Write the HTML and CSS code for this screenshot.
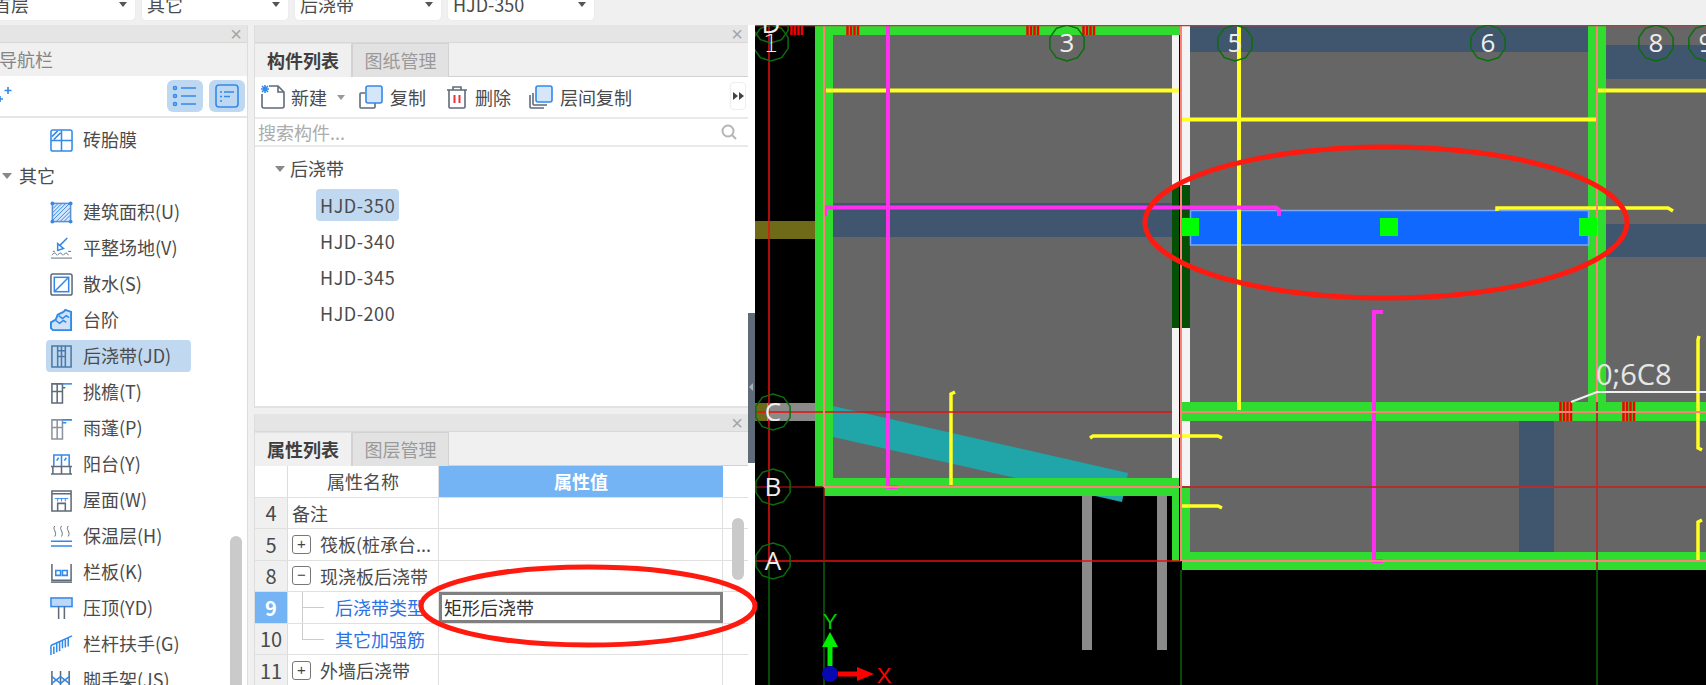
FILE: index.html
```html
<!DOCTYPE html>
<html lang="zh-CN">
<head>
<meta charset="utf-8">
<title>后浇带</title>
<link rel="stylesheet" href="styles.css">
</head>
<body>
<div class="app">
  <header class="topbar">
    <div class="select"><span>首层</span><i class="tri"></i></div>
    <div class="select"><span>其它</span><i class="tri"></i></div>
    <div class="select"><span>后浇带</span><i class="tri"></i></div>
    <div class="select"><span>HJD-350</span><i class="tri"></i></div>
  </header>
  <main class="workspace">
    <section class="nav">
      <div class="titlebar"><span class="close">×</span></div>
      <div class="nav-head"><span>导航栏</span></div>
      <div class="nav-tools">
        <svg class="sparkle" width="14" height="24" viewBox="0 0 14 24"><path class="ib" d="M8 3v7M4.500 6.500h7M0 12v6M-3 15h6"/></svg>
        <div class="nav-btns">
          <button class="view-btn"><svg width="26" height="26" viewBox="0 0 26 26"><path class="ib" d="M9 5h15M9 13h15M9 21h15"/><circle class="ib" cx="3" cy="5" r="1.500"/><circle class="ib" cx="3" cy="13" r="1.500"/><circle class="ib" cx="3" cy="21" r="1.500"/></svg></button>
          <button class="view-btn"><svg width="24" height="24" viewBox="0 0 24 24"><rect class="ib" x="1" y="1" width="22" height="22" rx="3"/><path class="ib" d="M5 8h2M9 8h10M5 12.500h2M9 12.500h6M5 17h2"/></svg></button>
        </div>
      </div>
      <div class="nav-tree">
        <div class="nrow"><svg class="nic" viewBox="0 0 24 24"><rect class="ib" x="1" y="1" width="22" height="22" rx="2"/><path class="ib" d="M12 1v22M1 12h22M2 8l6-6M4 11l7-7"/></svg><span>砖胎膜</span></div>
        <div class="ncat"><i class="tri tri-cat"></i><span>其它</span></div>
        <div class="nrow"><svg class="nic" viewBox="0 0 24 24"><rect class="ifl3" x="2.500" y="2.500" width="19" height="19"/><path class="ib thin" d="M3 8l5-5M3 12l9-9M3 16l13-13M3 20L20 3M7 21L21 7M11 21l10-10M15 21l6-6"/><circle class="dot" cx="2.500" cy="2.500" r="2"/><circle class="dot" cx="21.500" cy="2.500" r="2"/><circle class="dot" cx="2.500" cy="21.500" r="2"/><circle class="dot" cx="21.500" cy="21.500" r="2"/></svg><span>建筑面积(U)</span></div>
        <div class="nrow"><svg class="nic" viewBox="0 0 24 24"><path class="ib" d="M18 1l-8 8M8 7l6 5-6 2z"/><path class="ig thin" d="M1 22h22M2 19c2-3 4-3 5 0M8 19c2-3 4-3 5 0M14 19c2-3 4-3 5 0M19 15h3M3 15h2"/></svg><span>平整场地(V)</span></div>
        <div class="nrow"><svg class="nic" viewBox="0 0 24 24"><rect class="ig" x="1" y="1" width="22" height="22" rx="2"/><rect class="ib" x="4.500" y="4.500" width="15" height="15"/><path class="ib" d="M5 19L19 5"/></svg><span>散水(S)</span></div>
        <div class="nrow"><svg class="nic" viewBox="0 0 24 24"><path class="ifb" d="M1 14l5-3 2-5 6-3 2-2 6 2v19H3l-2-2z"/><path class="ib" d="M6 12l4 3 4-3 3 2M9 7l4 3 4-3 3 2"/></svg><span>台阶</span></div>
        <div class="nrow sel"><svg class="nic" viewBox="0 0 24 24"><path class="ic" d="M2 1h6v22H2zM16 1h6v22h-6zM8 6h8M8 12h8M12 1v22M8 1h8M8 23h8"/></svg><span>后浇带(JD)</span></div>
        <div class="nrow"><svg class="nic" viewBox="0 0 24 24"><path class="ig" d="M2 3h11v20H2zM7.500 3v20M2 11h11"/><path class="ib" d="M13 3h10"/><path class="ig" d="M13 7h3"/></svg><span>挑檐(T)</span></div>
        <div class="nrow"><svg class="nic" viewBox="0 0 24 24"><path class="ig-l" d="M2 3h11v20H2zM7.500 3v20M2 11h11"/><path class="ib" d="M13 3h10M13 6h4"/></svg><span>雨蓬(P)</span></div>
        <div class="nrow"><svg class="nic" viewBox="0 0 24 24"><path class="ib" d="M4 14V2h16v12M12 2v12M7 8l2-3M15 8l2-3"/><path class="ig" d="M1 14h22M1 22h22M3 14v8M12 14v8M21 14v8"/></svg><span>阳台(Y)</span></div>
        <div class="nrow"><svg class="nic" viewBox="0 0 24 24"><path class="ig" d="M2 2h20v3H2zM2 5v18h20V5M8 23v-8h8v8"/><path class="ib thin" d="M5 10h14M8 10v3M12 10v3M16 10v3"/></svg><span>屋面(W)</span></div>
        <div class="nrow"><svg class="nic" viewBox="0 0 24 24"><path class="ig thin" d="M5 1c-3 4 3 6 0 11M12 1c-3 4 3 6 0 11M19 1c-3 4 3 6 0 11"/><path class="ib" d="M1 17h22M1 22h22"/></svg><span>保温层(H)</span></div>
        <div class="nrow"><svg class="nic" viewBox="0 0 24 24"><path class="ig" d="M2 3v17h20V3"/><path class="ib" d="M6 10h5v5H6zM13 10h5v5h-5z"/><path class="ig" d="M1 22h22"/></svg><span>栏板(K)</span></div>
        <div class="nrow"><svg class="nic" viewBox="0 0 24 24"><rect class="ifl" x="1" y="1" width="22" height="9"/><path class="ig" d="M9 10v13M15 10v13"/></svg><span>压顶(YD)</span></div>
        <div class="nrow"><svg class="nic" viewBox="0 0 24 24"><path class="ib" d="M1 13L23 3M1 13v10M7 10v10M13 8v8M19 5v9M4 22v-8M10 19V9M16 15V7"/></svg><span>栏杆扶手(G)</span></div>
        <div class="nrow"><svg class="nic" viewBox="0 0 24 24"><path class="ig" d="M2 2v22M11 2v22M20 2v22"/><path class="ib" d="M2 8l9 7M11 8l-9 7M11 8l9 7M20 8l-9 7"/></svg><span>脚手架(JS)</span></div>
        <div class="vscroll"></div>
      </div>
    </section>

    <section class="mid">
      <div class="panel panel-list">
        <div class="titlebar"><span class="close">×</span></div>
        <div class="tabs"><div class="tab on">构件列表</div><div class="tab">图纸管理</div></div>
        <div class="tools">
          <div class="tool"><svg width="24" height="24" viewBox="0 0 24 24"><path class="ig" d="M8 1h9l6 6v14a2 2 0 0 1-2 2H3a2 2 0 0 1-2-2V9"/><path class="ig" d="M17 1v6h6"/><path class="ib" d="M1 1l6 6M7 1L1 7M4 0v8M0 4h8"/></svg><span>新建</span><i class="tri tri-sm"></i></div>
          <div class="tool t-copy"><svg width="24" height="24" viewBox="0 0 24 24"><path class="ig" d="M6 8H2a1 1 0 0 0-1 1v13a1 1 0 0 0 1 1h13a1 1 0 0 0 1-1v-4"/><rect class="ifl2" x="7" y="1" width="16" height="17" rx="2"/></svg><span>复制</span></div>
          <div class="tool t-del"><svg width="22" height="24" viewBox="0 0 22 24"><path class="ig" d="M1 5h20M7 5V2h8v3M3 5v17a1 1 0 0 0 1 1h14a1 1 0 0 0 1-1V5"/><path class="ir" d="M8.500 10v8M13.500 10v8"/></svg><span>删除</span></div>
          <div class="tool t-floor"><svg width="24" height="24" viewBox="0 0 24 24"><path class="ig" d="M1 10v12a1 1 0 0 0 1 1h13M4 8v11a1 1 0 0 0 1 1h13"/><rect class="ifl2" x="7" y="1" width="16" height="16" rx="2"/></svg><span>层间复制</span></div>
          <div class="more"><i class="mtri"></i><i class="mtri"></i></div>
        </div>
        <div class="search"><span>搜索构件...</span><svg width="16" height="16" viewBox="0 0 16 16"><circle class="is" cx="7" cy="7" r="5.500"/><path class="is" d="M11 11l4 4"/></svg></div>
        <div class="ltree">
          <div class="lcat"><i class="tri tri-cat"></i><span>后浇带</span></div>
          <div class="litem sel">HJD-350</div>
          <div class="litem">HJD-340</div>
          <div class="litem">HJD-345</div>
          <div class="litem">HJD-200</div>
        </div>
      </div>
      <div class="panel panel-props">
        <div class="titlebar"><span class="close">×</span></div>
        <div class="tabs"><div class="tab on">属性列表</div><div class="tab">图层管理</div></div>
        <div class="table">
          <div class="tr thead"><div class="num blank"></div><div class="name center">属性名称</div><div class="val hl">属性值</div></div>
          <div class="tr"><div class="num">4</div><div class="name">备注</div><div class="val"></div></div>
          <div class="tr"><div class="num">5</div><div class="name"><b class="box">+</b><span>筏板(桩承台...</span></div><div class="val"></div></div>
          <div class="tr"><div class="num">8</div><div class="name"><b class="box">−</b><span>现浇板后浇带</span></div><div class="val"></div></div>
          <div class="tr"><div class="num hl">9</div><div class="name child first"><span>后浇带类型</span></div><div class="val edit">矩形后浇带</div></div>
          <div class="tr"><div class="num">10</div><div class="name child last"><span>其它加强筋</span></div><div class="val"></div></div>
          <div class="tr"><div class="num">11</div><div class="name"><b class="box">+</b><span>外墙后浇带</span></div><div class="val"></div></div>
          <div class="vscroll tscroll"></div>
        </div>
      </div>
    </section>

    <div class="splitter"><i class="grip"></i></div>

    <section class="canvas">
      <svg class="cad" width="951" height="660" viewBox="755 25 951 660">
        <defs>
          <polygon id="octa" class="bub" points="0,-18 10.600,-14.600 17.100,-5.600 17.100,5.600 10.600,14.600 0,18 -10.600,14.600 -17.100,5.600 -17.100,-5.600 -10.600,-14.600"/>
          <g id="ticks" class="tick"><path d="M1.500 0v9M5 0v9M8.500 0v9M12 0v9"/></g>
          <g id="ticksT" class="tick"><path d="M1.500 0v19M5 0v19M8.500 0v19M12 0v19"/></g>
        </defs>
        <rect class="grey" x="833" y="35" width="339" height="443"/>
        <rect class="grey" x="1190" y="26" width="516" height="376"/>
        <rect class="grey" x="1190" y="421" width="516" height="131"/>
        <rect class="beam" x="833" y="203" width="339" height="34"/>
        <rect class="beam" x="1190" y="26" width="398" height="26"/>
        <rect class="beam" x="1606" y="45" width="100" height="34"/>
        <rect class="beam" x="1606" y="224" width="100" height="33"/>
        <rect class="beam" x="1519" y="421" width="35" height="131"/>
        <rect class="olive" x="755" y="221" width="60" height="18"/>
        <rect class="stub" x="755" y="403" width="60" height="18"/>
        <rect class="olive" x="755" y="403" width="12" height="18"/>
        <polygon class="teal" points="833,406 1128,473 1122,502 833,437"/>
        <rect class="col" x="1082" y="496" width="10" height="154"/>
        <rect class="col" x="1157" y="496" width="10" height="154"/>

        <path class="wall" d="M815 487V26H1183V35H833V478H1179V561H1172V496H815V487ZM824 487H815V496H824Z"/>
        <rect class="white" x="1172" y="35" width="7" height="150"/>
        <rect class="white" x="1182" y="26" width="8" height="159"/>
        <rect class="dkgreen" x="1172" y="185" width="7" height="143"/>
        <rect class="dkgreen" x="1182" y="185" width="8" height="143"/>
        <rect class="white" x="1172" y="328" width="7" height="150"/>
        <rect class="white" x="1182" y="328" width="8" height="159"/>
        <rect class="wall" x="1588" y="26" width="18" height="376"/>
        <rect class="wall" x="1182" y="402" width="524" height="19"/>
        <rect class="wall" x="1182" y="487" width="8" height="83"/>
        <rect class="wall" x="1182" y="552" width="524" height="18"/>

        <rect class="sel-band" x="1190.500" y="210.500" width="398" height="34.500"/>

        <use href="#ticks" x="790" y="26"/><use href="#ticks" x="846" y="26"/><use href="#ticks" x="1026" y="26"/><use href="#ticks" x="1082" y="26"/>
        <use href="#ticksT" x="1559" y="402"/><use href="#ticksT" x="1622" y="402"/>

        <path class="yl" d="M826 90.500H1179M1182 119.500H1596M1239 26V410M1598 90.500H1706"/>
        <path class="yl thin" d="M1497 211V208H1668L1673 211M951 485V394L955 392M1090 438L1093 436H1218L1222 438M1182 506H1218L1222 508M1699 336L1698 340V448L1702 450M1702 520L1698 522V561"/>
        <path class="mg" d="M888 26V487H898M825 216V207.500H1276L1279 210V216M1383 312H1374V561H1383"/>

        <path class="gd-red" d="M769 25V561M755 412H1172M755 561H1181"/>
        <path class="gd-dk" d="M824 487V561M755 487H824"/>
        <path class="gd-mid" d="M1181 487H1706M1597 402V570"/>
        <path class="gd-green" d="M769 561V685M824 561V685M1181 570V685M1597 570V685"/>
        <path class="gd-pink" d="M824 26V487M824 487H1181M1181 25V561M1597 26V402M1182 412H1706M1182 561H1706"/>
        <path class="gd-top" d="M755 25.500H1706"/>

        <rect class="handle" x="1181" y="218" width="18" height="18"/>
        <rect class="handle" x="1380" y="218" width="18" height="18"/>
        <rect class="handle" x="1579" y="218" width="18" height="18"/>

        <use href="#octa" x="771" y="25"/><use href="#octa" x="771" y="43"/>
        <use href="#octa" x="1067" y="43"/><use href="#octa" x="1235" y="43"/><use href="#octa" x="1488" y="43"/><use href="#octa" x="1656" y="43"/><use href="#octa" x="1706" y="43"/>
        <use href="#octa" x="773" y="412"/><use href="#octa" x="773" y="487"/><use href="#octa" x="773" y="561"/>

        <g class="bubtxt">
          <text x="771" y="33">D</text><text class="one" x="771" y="52">1</text>
          <text x="1067" y="52">3</text><text x="1235" y="52">5</text><text x="1488" y="52">6</text><text x="1656" y="52">8</text><text x="1706" y="52">9</text>
          <text x="773" y="421">C</text><text x="773" y="496">B</text><text x="773" y="570">A</text>
        </g>
        <path class="leader" d="M1571 402L1597 392H1706"/>
        <text class="dim" x="1596" y="385">0;6C8</text>

        <path class="ax-g" d="M830 666V645"/>
        <polygon class="ax-gf" points="830,632 838,647 822,647"/>
        <path class="ax-r" d="M838 674H860"/>
        <polygon class="ax-rf" points="874,674 857,667 857,681"/>
        <circle class="ax-o" cx="830" cy="674" r="8"/>
        <text class="ax-ty" x="830" y="629">Y</text>
        <text class="ax-tx" x="884" y="683">X</text>
      </svg>
    </section>
  </main>
  <svg class="marks" width="1706" height="685" viewBox="0 0 1706 685">
    <ellipse cx="1386" cy="222.500" rx="241" ry="75.500"/>
    <ellipse cx="588" cy="606" rx="167" ry="39"/>
  </svg>
</div>
</body>
</html>
```
FILE: styles.css
```css
* { box-sizing: border-box; }
html, body { margin: 0; padding: 0; }
body {
  width: 1706px; height: 685px; overflow: hidden; background: #f0f0f0;
  font-family: "Noto Sans CJK SC", "Noto Sans", sans-serif;
  font-size: 18px; color: #4b4b4b;
}
.app { position: relative; width: 1706px; height: 685px; overflow: hidden; display: flex; flex-direction: column; }

/* top selects */
.topbar { height: 25px; flex: none; display: flex; gap: 5px; align-items: flex-end; margin-left: -13px; padding-bottom: 4px; overflow: hidden; }
.select { width: 148px; height: 34px; flex: none; background: #fff; border: 1px solid #ececec; border-radius: 5px; padding: 0 8px 0 5px; display: flex; align-items: center; justify-content: space-between; line-height: 34px; white-space: nowrap; }
.select:first-child { width: 149px; }
.tri { display: block; width: 0; height: 0; border-left: 4px solid transparent; border-right: 4px solid transparent; border-top: 5px solid #555; }
.tri-cat { border-left-width: 5px; border-right-width: 5px; border-top: 6px solid #888; }
.tri-sm { border-top-color: #999; margin-left: 4px; }

.workspace { flex: 1; display: flex; min-height: 0; }
.titlebar { height: 18px; flex: none; background: #e5e5e5; border-bottom: 1px solid #d8d8d8; display: flex; justify-content: flex-end; align-items: center; padding-right: 5px; }
.close { color: #a4a4a4; font-size: 20px; line-height: 18px; font-family: "Liberation Sans", sans-serif; }

/* left navigator */
.nav { width: 248px; flex: none; display: flex; flex-direction: column; border-right: 1px solid #ddd; }
.nav-head { height: 33px; flex: none; display: flex; align-items: center; color: #858585; padding-bottom: 2px; }
.nav-head span { margin-left: -1px; }
.nav-tools { height: 42px; flex: none; background: #fff; border-bottom: 2px solid #e6e6e6; display: flex; align-items: center; justify-content: space-between; padding: 0 2px 0 0; }
.sparkle { display: block; overflow: visible; }
.nav-btns { display: flex; gap: 6px; }
.view-btn { width: 36px; height: 32px; border: 0; padding: 0; border-radius: 6px; background: #bfd8f2; display: flex; align-items: center; justify-content: center; }
.nav-tree { position: relative; flex: 1; background: #fff; padding-top: 6px; overflow: hidden; }
.nrow { width: 145px; height: 32px; margin: 0 0 4px 46px; padding-left: 4px; display: flex; align-items: center; gap: 10px; white-space: nowrap; border-radius: 4px; }
.nrow span, .ncat span, .lcat span { padding-bottom: 2px; }
.nrow.sel { background: #c0d8f0; }
.ncat { height: 32px; margin-bottom: 4px; padding-left: 2px; display: flex; align-items: center; gap: 7px; }
.nic { width: 23px; height: 23px; flex: none; overflow: visible; }
.vscroll { position: absolute; width: 12px; background: #cacaca; border-radius: 6px; }
.nav-tree .vscroll { left: 230px; top: 418px; height: 160px; }

/* icon strokes */
.ib, .ig, .ig-l, .ic, .ir, .is, .ifl, .ifl2, .ifl3, .ifb { fill: none; stroke-width: 1.6; }
.ib { stroke: #3389ea; }
.ig { stroke: #5f6b78; }
.ig-l { stroke: #8a94a0; }
.ic { stroke: #4a7aa8; }
.ir { stroke: #e8323c; stroke-width: 2; }
.is { stroke: #b5b5b5; stroke-width: 2; }
.ifl { fill: #bcd8f6; stroke: #3389ea; }
.ifl2 { fill: #d6e6fa; stroke: #3389ea; }
.ifl3 { fill: #d6e6fa; stroke: #5f8fd0; }
.ifb { fill: #cfe2f8; stroke: #3389ea; stroke-width: 2; }
.thin { stroke-width: 1; }
.dot { fill: #3389ea; }

/* middle column */
.mid { width: 494px; margin-left: 6px; flex: none; display: flex; flex-direction: column; gap: 6px; }
.panel { display: flex; flex-direction: column; border-left: 1px solid #ddd; }
.panel-list { height: 383px; }
.panel-props { flex: 1; min-height: 0; }
.tabs { height: 34px; flex: none; display: flex; border-bottom: 1px solid #d2d2d2; }
.tab { width: 97px; height: 34px; display: flex; align-items: center; justify-content: center; padding-bottom: 2px; color: #9a9a9a; background: #e2e2e2; border: 1px solid #d2d2d2; border-bottom: 0; }
.tab.on { color: #3f3f3f; font-weight: 700; background: #f0f0f0; border-left: 0; border-top-color: #e2e2e2; }
.tools { height: 42px; flex: none; background: #fff; border-bottom: 2px solid #eaeaea; display: flex; align-items: center; padding-left: 6px; position: relative; }
.tool { display: flex; align-items: center; gap: 6px; white-space: nowrap; }
.t-copy { margin-left: 14px; gap: 7px; }
.t-del { margin-left: 20px; gap: 7px; }
.t-floor { margin-left: 18px; gap: 7px; }
.more { position: absolute; right: 2px; top: 5px; width: 16px; height: 28px; border: 1px solid #eee; border-radius: 4px; display: flex; align-items: center; justify-content: center; gap: 1px; }
.mtri { width: 0; height: 0; border-top: 4px solid transparent; border-bottom: 4px solid transparent; border-left: 5px solid #444; }
.search { height: 28px; flex: none; background: #fff; border-bottom: 2px solid #eaeaea; display: flex; align-items: center; justify-content: space-between; padding: 0 11px 0 3px; color: #acacac; }
.ltree { flex: 1; background: #fff; border-bottom: 2px solid #e2e2e2; padding-top: 6px; }
.lcat { height: 32px; margin-bottom: 4px; padding-left: 20px; display: flex; align-items: center; gap: 5px; }
.litem { width: 83px; height: 32px; margin: 0 0 4px 61px; padding-left: 4px; line-height: 32px; border-radius: 4px; white-space: nowrap; letter-spacing: .55px; }
.litem.sel { background: #c0d8f0; }

/* property table */
.table { position: relative; flex: 1; background: #fff; overflow: hidden; }
.tr { display: flex; height: 31.5px; border-bottom: 1.5px solid #e0e0e0; }
.num { width: 33px; flex: none; background: #f0f0f0; border-right: 1.5px solid #dcdcdc; display: flex; align-items: center; justify-content: center; font-size: 20px; }
.num.blank { background: #fff; }
.num.hl { background: #74b4f5; color: #fff; font-weight: 700; }
.name { width: 151px; flex: none; border-right: 1.5px solid #e0e0e0; display: flex; align-items: center; gap: 9px; padding-left: 4px; white-space: nowrap; overflow: hidden; }
.name.center { justify-content: center; padding: 0; }
.val { width: 284px; flex: none; border-right: 1.5px solid #e0e0e0; display: flex; align-items: center; }
.val.hl { background: #74b4f5; color: #fff; font-weight: 700; justify-content: center; border: 0; }
.val.edit { border: 3px solid #808080; padding-left: 2px; color: #333; }
.box { width: 19px; height: 19px; flex: none; border: 1.5px solid #777; border-radius: 3px; font-weight: 400; font-size: 15px; line-height: 15px; text-align: center; color: #444; font-family: "Liberation Sans", sans-serif; }
.child { padding-left: 47px; color: #2a72e6; position: relative; overflow: hidden; }
.child::before { content: ""; position: absolute; left: 14px; width: 22px; top: 50%; border-top: 1px solid #ccc; }
.child::after { content: ""; position: absolute; left: 14px; top: 0; height: 50%; border-left: 1px solid #ccc; }
.child.first::after { height: 100%; }
.tscroll { left: 477px; top: 52px; height: 62px; }

/* splitter */
.splitter { width: 7px; flex: none; position: relative; background: linear-gradient(#fff 0, #fff 288px, #5f6b78 288px, #5f6b78 438px, #fff 438px); margin-left: 0; }
.grip { position: absolute; left: 1px; top: 358px; width: 0; height: 0; border-top: 4px solid transparent; border-bottom: 4px solid transparent; border-right: 4px solid #a8b0b8; }

/* CAD canvas */
.canvas { flex: 1; min-width: 0; background: #000; overflow: hidden; }
.cad { display: block; }
.grey { fill: #666; }
.beam { fill: #40566f; }
.olive { fill: #6e6a18; }
.stub, .col { fill: #8a8a8a; }
.teal { fill: #20a5a8; }
.wall { fill: #2fdc2f; }
.white { fill: #f4f4f4; }
.dkgreen { fill: #045004; }
.tick path { stroke: #f00000; stroke-width: 2.500; fill: none; }
.yl { stroke: #ffff22; stroke-width: 4; fill: none; }
.yl.thin { stroke-width: 3.5; }
.mg { stroke: #ff2ff0; stroke-width: 4; fill: none; }
.gd-red { stroke: #e81010; stroke-width: 1.5; fill: none; }
.gd-dk { stroke: #8c0c0c; stroke-width: 1.5; fill: none; }
.gd-mid { stroke: #b03030; stroke-width: 2; fill: none; }
.gd-green { stroke: #0b600b; stroke-width: 1.5; fill: none; }
.gd-pink { stroke: #ff8078; stroke-width: 2; fill: none; }
.gd-top { stroke: #d03030; stroke-width: 1.5; fill: none; }
.sel-band { fill: #1068ff; stroke: #7da8f0; stroke-width: 1.5; }
.handle { fill: #00ff00; }
.bub { fill: none; stroke: #0b6d0b; stroke-width: 1.500; }
.bubtxt text { fill: #eee; font-family: "Open Sans", sans-serif; font-size: 26px; text-anchor: middle; }
.bubtxt text.one { font-family: "DejaVu Sans", sans-serif; font-size: 25px; font-weight: 300; }
.leader { fill: none; stroke: #f0f0f0; stroke-width: 2; }
.dim { fill: #e6e6e6; font-family: "Open Sans", sans-serif; font-size: 29px; }
.ax-g { stroke: #00f000; stroke-width: 5; fill: none; }
.ax-gf { fill: #00f000; }
.ax-r { stroke: #f00; stroke-width: 5; fill: none; }
.ax-rf { fill: #f00; }
.ax-o { fill: #0808b0; }
.ax-ty, .ax-tx { font-family: "Liberation Sans", sans-serif; font-size: 22px; text-anchor: middle; }
.ax-ty { fill: #00d000; }
.ax-tx { fill: #f00; }

/* hand-drawn annotation rings over the screenshot */
.marks { position: absolute; left: 0; top: 0; pointer-events: none; }
.marks ellipse { fill: none; stroke: #ff1a10; stroke-width: 5; }
```
